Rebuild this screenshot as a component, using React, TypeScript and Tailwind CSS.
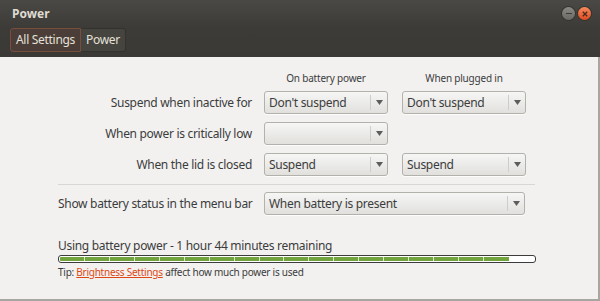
import { ReactNode } from "react";

const font = { fontFamily: '"Noto Sans", "Open Sans", sans-serif' };

function Combo({ value, width }: { value: string; width: string }) {
    return (
        <div className={`flex h-[23px] ${width} items-stretch rounded-[3px] border border-[#b3b1ab] bg-gradient-to-b from-[#f6f6f5] to-[#e1e0dd] text-[12px] tracking-[-0.3px] text-[#3c3c3c] shadow-[0_1px_0_rgba(255,255,255,0.8)]`}>
            <div className="flex flex-1 items-center overflow-hidden whitespace-nowrap pl-[4px]">{value}</div>
            <div className="my-[3px] w-px bg-[#cfcdc9]" />
            <div className="flex w-[16px] items-center justify-center">
                <svg width="7" height="5" viewBox="0 0 7 5">
                    <path d="M0 0 L7 0 L3.5 5 Z" fill="#5d5d5d" />
                </svg>
            </div>
        </div>
    );
}

function Row({ label, children }: { label: string; children: ReactNode }) {
    return (
        <div className="flex h-[23px] items-center">
            <div className="w-[206px] pr-[12px] text-right text-[12px] tracking-[-0.3px] text-[#3c3c3c] whitespace-nowrap">{label}</div>
            <div className="flex gap-[14px]">{children}</div>
        </div>
    );
}

export default function App() {
    const ticks = Array.from({ length: 18 });
    return (
        <div className="flex h-[301px] w-[600px] flex-col overflow-hidden bg-[#3c3b37]" style={font}>
            {/* title bar */}
            <div className="flex h-[27px] items-center justify-between bg-gradient-to-b from-[#4a4945] to-[#3c3b37] pl-[12px] pr-[9px]">
                <span className="text-[12px] font-bold text-[#dfdbd2]">Power</span>
                <div className="flex gap-[3px]">
                    <div className="flex h-[13px] w-[13px] items-center justify-center rounded-full bg-gradient-to-b from-[#8a8984] to-[#6a6964] shadow-[0_0_0_1px_#35342f]">
                        <div className="h-[1.5px] w-[6px] bg-[#3c3b37]" />
                    </div>
                    <div className="flex h-[13px] w-[13px] items-center justify-center rounded-full bg-gradient-to-b from-[#f58a5c] to-[#e0491c] shadow-[0_0_0_1px_#35342f]">
                        <svg width="6" height="6" viewBox="0 0 6 6">
                            <path d="M0.8 0.8 L5.2 5.2 M5.2 0.8 L0.8 5.2" stroke="#4a2a1e" strokeWidth="1.3" />
                        </svg>
                    </div>
                </div>
            </div>
            {/* toolbar */}
            <div className="flex h-[30px] items-start bg-gradient-to-b from-[#3c3b37] to-[#3a3935] pl-[10px] pt-[1px]">
                <div className="flex h-[24px] items-center rounded-l-[3px] border border-[#7a4c3e] bg-[#4b3d37] px-[5px] text-[12px] tracking-[-0.3px] text-[#e4e1da]">All Settings</div>
                <div className="flex h-[24px] items-center rounded-r-[3px] border border-l-0 border-[#33322e] bg-[#45443f] px-[5px] text-[12px] tracking-[-0.3px] text-[#e4e1da]">Power</div>
            </div>
            {/* content */}
            <div className="flex flex-1 flex-col border-r-2 border-b-2 border-[#a8a6a1] bg-[#f2f1f0] pl-[58px] pr-[63px]">
                <div className="mt-[14px] flex text-[10px] tracking-[-0.2px] text-[#3c3c3c]">
                    <div className="w-[206px]" />
                    <div className="w-[124px] text-center">On battery power</div>
                    <div className="w-[14px]" />
                    <div className="w-[124px] text-center">When plugged in</div>
                </div>
                <div className="mt-[5px] flex flex-col gap-[8px]">
                    <Row label="Suspend when inactive for">
                        <Combo value="Don't suspend" width="w-[124px]" />
                        <Combo value="Don't suspend" width="w-[124px]" />
                    </Row>
                    <Row label="When power is critically low">
                        <Combo value="" width="w-[124px]" />
                    </Row>
                    <Row label="When the lid is closed">
                        <Combo value="Suspend" width="w-[124px]" />
                        <Combo value="Suspend" width="w-[124px]" />
                    </Row>
                </div>
                <div className="mt-[8px] h-px w-[477px] bg-[#d9d7d3]" />
                <div className="mt-[7px] flex h-[23px] items-center">
                    <div className="w-[206px] text-[12px] tracking-[-0.3px] text-[#3c3c3c] whitespace-nowrap">Show battery status in the menu bar</div>
                    <Combo value="When battery is present" width="w-[261px]" />
                </div>
                <div className="mt-[23px] text-[12px] leading-[16px] tracking-[-0.3px] text-[#3c3c3c]">Using battery power - 1 hour 44 minutes remaining</div>
                <div className="mt-[1px] flex h-[8px] w-[478px] items-stretch rounded-[3px] border border-[#3c3c3c] bg-white p-[1px]">
                    <div className="relative w-[449px] rounded-l-[1px] bg-[#72a43d]">
                        <div className="absolute inset-0 flex">
                            {ticks.map((_, i) => (
                                <div key={i} className="w-[25px] border-r border-[#d8e8c8] last:border-r-0" />
                            ))}
                        </div>
                    </div>
                </div>
                <div className="mt-[2px] text-[10px] tracking-[-0.25px] text-[#3c3c3c]">
                    Tip: <span className="text-[#dd4814] underline">Brightness Settings</span> affect how much power is used
                </div>
            </div>
        </div>
    );
}
